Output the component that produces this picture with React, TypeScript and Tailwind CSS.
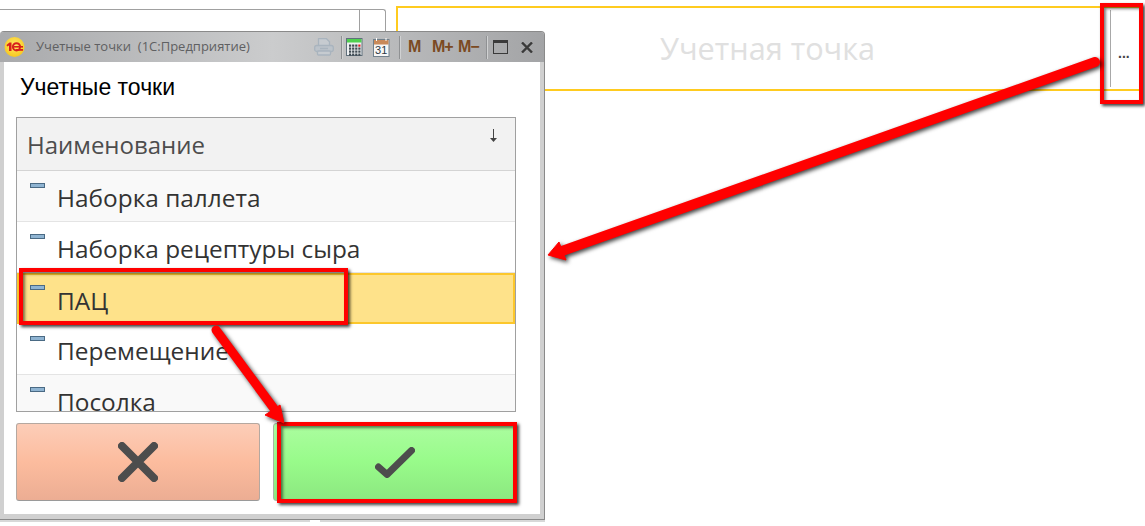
import React from "react";

const rows = [
  { t: "Наборка паллета", bg: "bg-[#f9f9f9]" },
  { t: "Наборка рецептуры сыра", bg: "bg-white" },
  { t: "ПАЦ", bg: "bg-[#fee28a]", sel: true },
  { t: "Перемещение", bg: "bg-white" },
  { t: "Посолка", bg: "bg-[#f9f9f9]" },
];

function Logo() {
  return (
    <svg width="21" height="20" viewBox="0 0 21 20" className="shrink-0">
      <defs>
        <radialGradient id="lg" cx="50%" cy="40%" r="60%">
          <stop offset="0%" stopColor="#ffe96a" />
          <stop offset="100%" stopColor="#f7c81e" />
        </radialGradient>
      </defs>
      <circle cx="10.5" cy="10" r="10" fill="url(#lg)" />
      <path d="M2.5 8L5.5 5.5H7.5V14H5V8.5L3.2 9.6Z" fill="#d8201c" />
      <circle cx="12.5" cy="9.8" r="3.6" fill="none" stroke="#d8201c" strokeWidth="2" />
      <rect x="10" y="9" width="9" height="1.6" fill="#d8201c" />
      <rect x="12" y="12" width="7" height="1.8" fill="#d8201c" />
    </svg>
  );
}

function Printer() {
  return (
    <svg width="20" height="18" viewBox="0 0 20 18" fill="none" stroke="#a9b4be" strokeWidth="1.3" className="shrink-0">
      <path d="M4.5 8V0.7h8l3 3V8" fill="#c6cbd0" />
      <rect x="0.7" y="7.5" width="18.6" height="6" rx="2" fill="#bcc3ca" />
      <path d="M6 10.5h8" />
      <rect x="3.5" y="13" width="13" height="4" rx="1" fill="#c6cbd0" />
    </svg>
  );
}

function Calc() {
  const cells = [];
  for (let r = 0; r < 4; r++)
    for (let c = 0; c < 4; c++)
      cells.push(
        <rect key={`${r}-${c}`} x={3 + c * 3.1} y={6.5 + r * 3} width="2.2" height="2.2" fill={c === 3 && r === 0 ? "#e02020" : "#3f4a52"} />
      );
  return (
    <svg width="17" height="18" viewBox="0 0 17 18" className="shrink-0">
      <rect x="0.5" y="0.5" width="15.5" height="17" fill="#eef0f2" stroke="#60707c" />
      <rect x="1" y="1" width="14.5" height="3.5" fill="#4fd04f" />
      {cells}
    </svg>
  );
}

function Calendar() {
  return (
    <svg width="17" height="19" viewBox="0 0 17 19" className="shrink-0">
      <rect x="0.5" y="1.5" width="15.5" height="17" fill="#f7f7f7" stroke="#70808c" />
      <rect x="1" y="2" width="14.5" height="4.5" fill="#c98a5a" />
      <rect x="3" y="0" width="1" height="3" fill="#fff" />
      <rect x="12.5" y="0" width="1" height="3" fill="#fff" />
      <text x="8.2" y="16" textAnchor="middle" fontSize="11" fontFamily="'Liberation Sans', sans-serif" fill="#2b3a46">31</text>
    </svg>
  );
}

function Sep() {
  return <div className="h-[23px] w-px shrink-0 bg-[#8f9193] border-r border-[#d0d1d2] box-content" />;
}

function Memo({ children, className }: { children: React.ReactNode; className?: string }) {
  return (
    <span className={`shrink-0 font-['Liberation_Sans',sans-serif] font-bold text-[16px] leading-none tracking-[-1px] text-[#7b4a22] ${className ?? ""}`}>
      {children}
    </span>
  );
}

function RowIcon() {
  return <div className="w-[15px] h-[5px] bg-[#8fb4d2] border border-[#4a6a84] shrink-0" />;
}

function Window() {
  return (
    <div className="absolute left-0 top-[31px] w-[545px] h-[489px] flex flex-col rounded-t-[4px] border-t border-r border-b border-[#8a8a8a] bg-[#d0d0d0] overflow-hidden">
      <div className="h-[30px] shrink-0 flex items-center bg-gradient-to-r from-[#a9aaac] via-[#cbcccd] to-[#a3a4a6]">
        <div className="w-[36px] pl-[4px] shrink-0">
          <Logo />
        </div>
        <span className="font-['Open_Sans',sans-serif] text-[13px] text-[#5f6062] w-[278px] shrink-0 whitespace-nowrap">Учетные точки&nbsp;&nbsp;(1С:Предприятие)</span>
        <Printer />
        <div className="w-[7px] shrink-0" />
        <Sep />
        <div className="w-[3px] shrink-0" />
        <Calc />
        <div className="w-[10px] shrink-0" />
        <Calendar />
        <div className="w-[9px] shrink-0" />
        <Sep />
        <div className="w-[7px] shrink-0" />
        <Memo className="w-[24px]">M</Memo>
        <Memo className="w-[26px]">M+</Memo>
        <Memo className="w-[28px]">M−</Memo>
        <Sep />
        <div className="w-[5px] shrink-0" />
        <div className="w-[15px] h-[14px] shrink-0 border border-[#3a3a3a] border-t-[3px]" />
        <div className="w-[13px] shrink-0" />
        <svg width="12" height="11" viewBox="0 0 12 11" stroke="#3a3a3a" strokeWidth="2.4" className="shrink-0">
          <path d="M1 0.5l10 10M11 0.5L1 10.5" />
        </svg>
      </div>
      <div className="flex-1 mx-[4px] mb-[5px] bg-white flex flex-col px-[12px] min-h-0">
        <div className="h-[55px] shrink-0 flex items-center pb-[5px] pl-[4px] font-['Liberation_Sans',sans-serif] text-[23px] text-black">Учетные точки</div>
        <div className="h-[295px] w-[500px] shrink-0 border border-[#a0a0a0] overflow-hidden bg-white font-['Open_Sans',sans-serif]">
          <div className="h-[53px] bg-[#f2f2f2] border-b border-[#d4d4d4] flex pl-[10px] pr-[18px] justify-between">
            <span className="text-[24px] leading-[53px] text-[#4d4d4d]">Наименование</span>
            <svg width="7" height="13" viewBox="0 0 7 13" className="mt-[11px]">
              <path d="M3.5 0V10" stroke="#444" strokeWidth="1" />
              <path d="M0 9H7L3.5 13Z" fill="#444" />
            </svg>
          </div>
          {rows.map((r) => (
            <div key={r.t} className={`h-[51px] flex items-start ${r.bg} ${r.sel ? "border-2 border-[#fcc72c] pl-[11px]" : "border-b border-[#e4e4e4] pl-[13px]"}`}>
              <div className={r.sel ? "mt-[10px]" : "mt-[12px]"}>
                <RowIcon />
              </div>
              <span className={`ml-[12px] text-[24.4px] leading-[53px] text-[#333] whitespace-nowrap ${r.sel ? "-mt-[1px]" : ""}`}>{r.t}</span>
            </div>
          ))}
        </div>
        <div className="flex gap-[13px] mt-[11px]">
          <div className="w-[244px] h-[78px] rounded-[3px] border border-[#b5a8a0] border-b-[#9a9a9a] bg-gradient-to-b from-[#fccdb8] via-[#fcbc9e] to-[#ecad93] flex items-center justify-center">
            <svg width="40" height="40" viewBox="0 0 40 40" stroke="#4d4d4d" strokeWidth="8" strokeLinecap="round">
              <path d="M4 4l32 32M36 4L4 36" />
            </svg>
          </div>
          <div className="w-[243px] h-[78px] rounded-[3px] border border-[#a8b8a4] bg-gradient-to-b from-[#abfd9f] via-[#98fb8a] to-[#8ce880] flex items-center justify-center">
            <svg width="40" height="31" viewBox="0 0 40 31" fill="none" stroke="#4d4d4d" strokeWidth="7" strokeLinecap="round" strokeLinejoin="round">
              <path d="M3.5 20L12 27.5L36.5 3.5" />
            </svg>
          </div>
        </div>
      </div>
    </div>
  );
}

function RedBox({ className }: { className: string }) {
  return <div className={`absolute border-[4px] border-[#ff0000] shadow-[2px_2px_3px_rgba(0,0,0,0.75),inset_2px_2px_3px_rgba(0,0,0,0.5)] ${className}`} />;
}

export default function App() {
  return (
    <div className="relative w-[1145px] h-[526px] overflow-hidden bg-white">
      <div className="flex items-start">
        <div className="mt-[9px] w-[386px] h-[30px] flex justify-end border-t border-r border-[#a0a0a0] rounded-tr-[3px]">
          <div className="w-[26px] h-full border-l border-[#a0a0a0]" />
        </div>
        <div className="ml-[10px] mr-[4px] mt-[6px] flex-1 h-[85px] border-2 border-[#ffcb1f] flex items-center">
          <div className="flex-1 pl-[262px] font-['Open_Sans',sans-serif] text-[30.7px] text-[#e0e0e0]">Учетная точка</div>
          <div className="w-[29px] h-[77px] border-l border-[#a8a8a8] flex items-center pl-[7px] pt-[10px] font-['Liberation_Sans',sans-serif] text-[#444] font-bold text-[14px]">...</div>
        </div>
      </div>
      <Window />
      <div className="absolute left-0 top-[520px] w-[545px] h-[2px] flex">
        <div className="w-[310px] bg-[#d8d8d8]" />
        <div className="w-[10px] bg-white" />
        <div className="flex-1 bg-[#d8d8d8]" />
      </div>
      <RedBox className="left-[1100px] top-[3px] w-[43px] h-[101px]" />
      <RedBox className="left-[19px] top-[268px] w-[329px] h-[57px]" />
      <RedBox className="left-[277px] top-[422px] w-[240px] h-[81px]" />
      <svg width="1145" height="526" viewBox="0 0 1145 526" className="absolute left-0 top-0 pointer-events-none drop-shadow-[2px_2px_2px_rgba(0,0,0,0.75)]">
        <path d="M1095 62L562 251" stroke="#ff0000" strokeWidth="10" strokeLinecap="round" fill="none" />
        <path d="M548 255L559 242L566 260Z" fill="#ff0000" stroke="#ff0000" strokeWidth="1" />
        <path d="M216 330L275 410" stroke="#ff0000" strokeWidth="9" strokeLinecap="round" fill="none" />
        <path d="M284 423L265 415L280 405Z" fill="#ff0000" stroke="#ff0000" strokeWidth="1" />
      </svg>
    </div>
  );
}
